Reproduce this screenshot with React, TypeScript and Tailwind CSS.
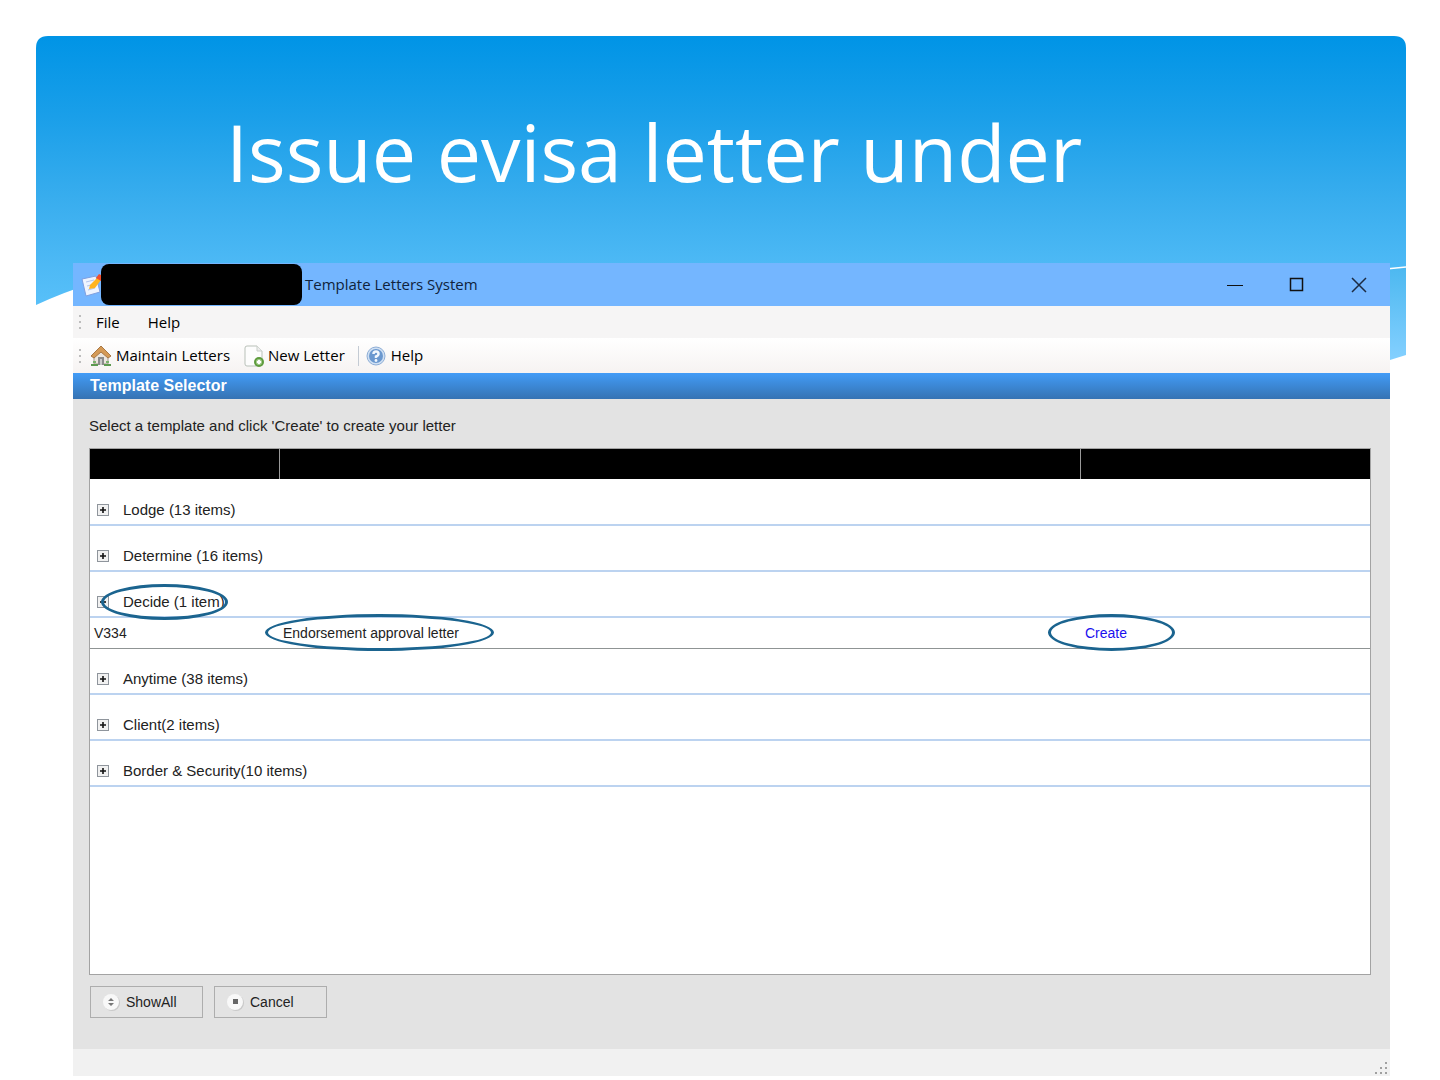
import React, { useState } from 'react';

type Letter = { code: string; name: string };
type Group = { label: string; letters: Letter[]; circled?: boolean };

const groups: Group[] = [
  { label: 'Lodge (13 items)', letters: [] },
  { label: 'Determine (16 items)', letters: [] },
  {
    label: 'Decide (1 item)',
    letters: [{ code: 'V334', name: 'Endorsement approval letter' }],
    circled: true,
  },
  { label: 'Anytime (38 items)', letters: [] },
  { label: 'Client(2 items)', letters: [] },
  { label: 'Border & Security(10 items)', letters: [] },
];

const Banner = () => (
  <svg
    className="w-full h-[324px]"
    viewBox="0 0 1370 324"
    preserveAspectRatio="none"
    aria-hidden="true"
  >
    <defs>
      <linearGradient id="sky" x1="0" y1="0" x2="0" y2="1">
        <stop offset="0" stopColor="#0094e6" />
        <stop offset="0.3" stopColor="#1a9fe9" />
        <stop offset="0.6" stopColor="#38adee" />
        <stop offset="0.85" stopColor="#4db9f5" />
        <stop offset="1" stopColor="#58c0f9" />
      </linearGradient>
      <linearGradient id="wave" x1="0" y1="0" x2="0" y2="1">
        <stop offset="0" stopColor="#4cb8f0" />
        <stop offset="1" stopColor="#84d0ff" />
      </linearGradient>
    </defs>
    <path d="M0 12Q0 0 12 0H1358Q1370 0 1370 12V232L60 246Q28 256 0 269Z" fill="url(#sky)" />
    <path d="M1340 234L1370 231V319L1354 324H1340Z" fill="url(#wave)" />
    <path d="M1340 234L1370 231" stroke="#fff" strokeWidth="1.5" />
  </svg>
);

const LetterIcon = () => (
  <svg width="22" height="24" viewBox="0 0 22 24" aria-hidden="true">
    <path d="M1 6L15 3L19 19L5 23Z" fill="#eef4ff" stroke="#7f9fe0" />
    <path d="M5 9L13 7M6 13L10 12M7 17L14 15" stroke="#b3c5ee" />
    <path d="M9 12L17 4L20 7L14 15L8 16Z" fill="#ffb41f" />
    <path d="M15 5L18 1L22 3L20 8Z" fill="#f04d2c" />
  </svg>
);

const HouseIcon = () => (
  <svg width="22" height="22" viewBox="0 0 22 22" aria-hidden="true">
    <path d="M4 11V19H18V11L11 5Z" fill="#ece6df" stroke="#a3968a" />
    <path d="M1 11L11 1L21 11L18 13L11 7L4 13Z" fill="#d59a56" stroke="#a97845" />
    <path d="M8 20V12H14V20Z" fill="#8b8b8b" />
    <path d="M10 20V14H12V20Z" fill="#c9c9c9" />
    <path d="M1 20H8M14 20H21" stroke="#5c9a50" strokeWidth="2" />
    <path d="M3 17H6M16 17H19" stroke="#79b36c" strokeWidth="2" />
  </svg>
);

const NewLetterIcon = () => (
  <svg width="22" height="24" viewBox="0 0 22 24" aria-hidden="true">
    <path d="M2 4Q2 2 4 2H14L19 7V20Q19 22 17 22H4Q2 22 2 20Z" fill="#fdfdfd" stroke="#b9c1b9" />
    <path d="M14 2V7H19" fill="#eee" stroke="#c9cfc9" />
    <circle cx="16" cy="18" r="5" fill="#5e9c3d" />
    <circle cx="16" cy="18" r="3" fill="#a9cf93" />
    <path d="M16 16V20M14 18H18" stroke="#fff" strokeWidth="2" />
  </svg>
);

const HelpIcon = () => (
  <svg width="20" height="20" viewBox="0 0 20 20" aria-hidden="true">
    <circle cx="10" cy="10" r="9" fill="#d0e0f3" stroke="#8eaed6" />
    <circle cx="10" cy="10" r="7" fill="#6b98cf" />
    <path d="M7.5 8Q7.5 5.5 10 5.5T12.5 8Q12.5 9.500 10 10.500V12" fill="none" stroke="#f2f7fd" strokeWidth="2.5" />
    <circle cx="10" cy="14.500" r="1.400" fill="#f2f7fd" />
  </svg>
);

const Grip = () => (
  <svg width="4" height="16" viewBox="0 0 4 16" className="shrink-0" aria-hidden="true">
    <path d="M1 1h2v2h-2zM1 7h2v2h-2zM1 13h2v2h-2z" fill="#bdbdbd" />
  </svg>
);

const ToggleIcon = ({ open }: { open: boolean }) => (
  <svg width="12" height="12" viewBox="0 0 12 12" aria-hidden="true">
    <rect x="0.5" y="0.5" width="11" height="11" fill="#f1f1f1" stroke="#8f959c" />
    <path d={open ? 'M3 6H9' : 'M3 6H9M6 3V9'} stroke="#111" strokeWidth="1.6" />
  </svg>
);

// pen ring drawn over the words it surrounds
const Ring = ({ className }: { className: string }) => (
  <span
    className={`absolute rounded-[50%] border-[3px] border-[#1b648f] pointer-events-none ${className}`}
  />
);

const TitleBar = () => (
  <div className="flex items-center h-[43px] pl-2 bg-[#74b6ff] text-[#10233c]">
    <LetterIcon />
    <div className="relative z-10 w-[201px] h-[41px] -ml-[2px] mr-[3px] rounded-lg bg-black" />
    <span className="text-[15px] whitespace-nowrap">Template Letters System</span>
    <div className="flex ml-auto">
      <button aria-label="Minimize" className="flex justify-center w-[62px]">
        <svg width="16" height="16" viewBox="0 0 16 16"><path d="M0 8.500H16" stroke="#111" /></svg>
      </button>
      <button aria-label="Maximize" className="flex justify-center w-[62px]">
        <svg width="16" height="16" viewBox="0 0 16 16"><rect x="1.500" y="1.500" width="12" height="12" fill="none" stroke="#111" strokeWidth="1.500" /></svg>
      </button>
      <button aria-label="Close" className="flex justify-center w-[62px]">
        <svg width="16" height="16" viewBox="0 0 16 16"><path d="M1 1L15 15M15 1L1 15" stroke="#1c2b42" strokeWidth="1.500" /></svg>
      </button>
    </div>
  </div>
);

const App = () => {
  const [openGroups, setOpenGroups] = useState<string[]>(['Decide (1 item)']);

  const toggle = (label: string) =>
    setOpenGroups(
      openGroups.includes(label) ? openGroups.filter((g) => g !== label) : [...openGroups, label]
    );

  return (
    <main className="grid min-h-screen bg-white font-['Open_Sans',sans-serif]">
      <div className="col-start-1 row-start-1 pt-9 pl-9 pr-[34px]">
        <Banner />
      </div>

      <div className="relative flex flex-col col-start-1 row-start-1 pl-[73px] pr-[50px] pb-1">
        <h1 className="h-[263px] pt-[102px] pl-[153px] text-[79px] leading-[100px] text-white whitespace-nowrap">
          Issue evisa letter under
        </h1>

        <section className="flex flex-col flex-1 bg-[#e3e3e3]">
          <TitleBar />

          <nav className="flex items-center h-8 pl-[5px] bg-[#f6f5f5] text-[15px] text-black">
            <Grip />
            <button className="ml-[14px]">File</button>
            <button className="ml-7">Help</button>
          </nav>

          <div className="flex items-center h-[35px] pl-[5px] bg-linear-to-b from-white to-[#f6f3f2] text-[15px] text-black">
            <Grip />
            <button className="flex items-center gap-1 ml-2">
              <HouseIcon /> Maintain Letters
            </button>
            <button className="flex items-center gap-[3px] ml-[13px]">
              <NewLetterIcon /> New Letter
            </button>
            <span className="w-px h-5 ml-[13px] bg-[#c4cbd4]" />
            <button className="flex items-center gap-[5px] ml-[7px]">
              <HelpIcon /> Help
            </button>
          </div>

          <div className="font-['Liberation_Sans',Arial,sans-serif] flex flex-col flex-1">
            <h2 className="h-[26px] pl-[17px] bg-linear-to-b from-[#429cf7] to-[#3573b3] text-base leading-[26px] font-bold text-white">
              Template Selector
            </h2>

            <div className="flex flex-col flex-1 pl-4 pr-[19px] text-[15px] text-[#222]">
              <p className="h-[49px] pt-[17px] leading-5">
                Select a template and click 'Create' to create your letter
              </p>

              <div className="flex-1 border border-[#a3a3a3] bg-white">
                <table className="w-full table-fixed border-collapse">
                  <thead>
                    <tr className="h-[30px] bg-black">
                      <th className="w-[189px] border-r border-[#9a9a9a]" />
                      <th className="border-r border-[#9a9a9a]" />
                      <th className="w-[290px]" />
                    </tr>
                  </thead>
                  <tbody>
                    {groups.map((group) => {
                      const open = openGroups.includes(group.label);
                      return (
                        <React.Fragment key={group.label}>
                          <tr className="h-[46px] border-b-2 border-[#bcd3f0]">
                            <td colSpan={3} className="align-bottom pl-[7px] pb-1">
                              <button
                                aria-expanded={open}
                                onClick={() => toggle(group.label)}
                                className="flex items-center gap-[14px] leading-5"
                              >
                                <ToggleIcon open={open} />
                                <span className="relative">
                                  {group.label}
                                  {group.circled && (
                                    <Ring className="-left-[22px] -top-2 w-[127px] h-9" />
                                  )}
                                </span>
                              </button>
                            </td>
                          </tr>
                          {open &&
                            group.letters.map((letter) => (
                              <tr key={letter.code} className="h-[31px] border-b border-[#8f9494] text-sm">
                                <td className="pl-1">{letter.code}</td>
                                <td className="pl-1">
                                  <span className="relative">
                                    {letter.name}
                                    <Ring className="-left-[18px] -top-[11px] w-[229px] h-[37px]" />
                                  </span>
                                </td>
                                <td className="pl-[5px]">
                                  <a href="#create" className="relative text-[#1a10ee]">
                                    Create
                                    <Ring className="-left-[37px] -top-[11px] w-[127px] h-[37px]" />
                                  </a>
                                </td>
                              </tr>
                            ))}
                        </React.Fragment>
                      );
                    })}
                  </tbody>
                </table>
              </div>

              <div className="flex gap-[11px] pt-[11px] pb-[31px] pl-px text-sm">
                <button className="flex items-center gap-[6px] w-[113px] h-8 pl-3 border border-[#adadad]">
                  <svg width="17" height="18" viewBox="0 0 17 18" aria-hidden="true">
                    <circle cx="9" cy="10" r="8" fill="#c9c9c9" />
                    <circle cx="8" cy="9" r="8" fill="#f8f8f8" />
                    <path d="M5 8L8 5L11 8ZM5 10H11L8 13Z" fill="#777" />
                  </svg>
                  ShowAll
                </button>
                <button className="flex items-center gap-[6px] w-[113px] h-8 pl-3 border border-[#adadad]">
                  <svg width="17" height="18" viewBox="0 0 17 18" aria-hidden="true">
                    <circle cx="9" cy="10" r="8" fill="#c9c9c9" />
                    <circle cx="8" cy="9" r="8" fill="#f8f8f8" />
                    <rect x="6" y="6" width="5" height="5" fill="#666" />
                  </svg>
                  Cancel
                </button>
              </div>
            </div>
          </div>

          <footer className="flex items-end justify-end h-[27px] pr-[2px] pb-px bg-[#f1f1f1]">
            <svg width="14" height="14" viewBox="0 0 14 14" aria-hidden="true">
              <path
                d="M11 1h2v2h-2zM6 6h2v2h-2zM11 6h2v2h-2zM1 11h2v2h-2zM6 11h2v2h-2zM11 11h2v2h-2z"
                fill="#a0a0a0"
              />
            </svg>
          </footer>
        </section>
      </div>
    </main>
  );
};

export default App;
